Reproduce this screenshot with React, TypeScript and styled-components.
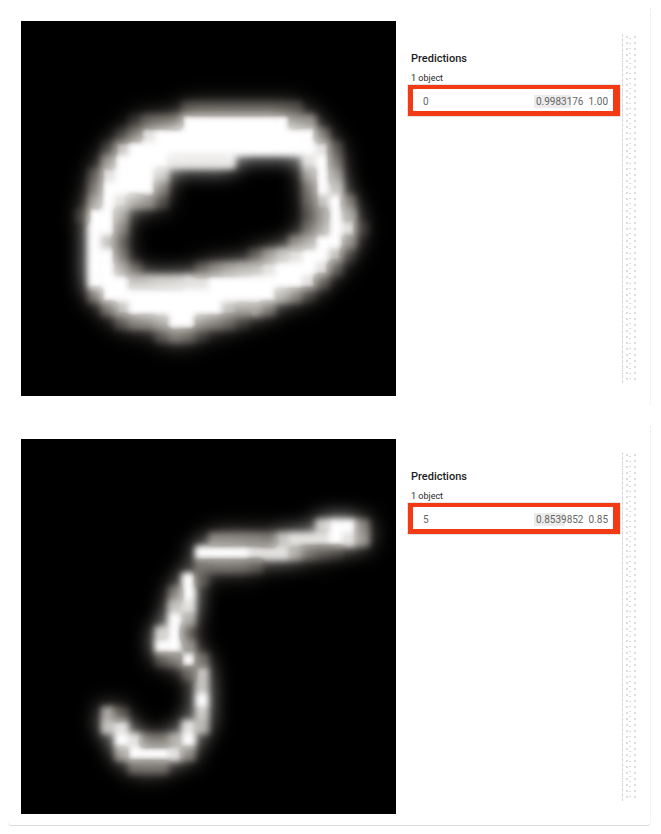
import React from "react";
import styled, { createGlobalStyle } from "styled-components";

const GlobalStyle = createGlobalStyle`
  html, body {
    margin: 0;
    background: #fff;
    font-family: Roboto, "Liberation Sans", sans-serif;
  }
`;

const Page = styled.div`
  width: 661px;
  height: 834px;
  padding: 8px 10px 0 8px;
  box-sizing: border-box;
  display: flex;
  flex-direction: column;
  gap: 19px;
  overflow: hidden;
`;

const Card = styled.section<{ $last?: boolean }>`
  display: flex;
  padding: 13px 0 ${(p) => (p.$last ? "11px" : "10px")} 13px;
  border-right: 1px dotted #e8e8e8;
  border-bottom: 1px solid ${(p) => (p.$last ? "#dcdcdc" : "transparent")};
  border-radius: 0 0 4px 4px;
`;

const Digit = styled.svg`
  display: block;
  flex: none;
  width: 375px;
  height: 375px;
  background: #000;
`;

const Panel = styled.div`
  flex: none;
  width: 224px;
  padding: 31px 0 0 15px;
  box-sizing: border-box;
`;

const Title = styled.h3`
  margin: 0;
  font-size: 11px;
  line-height: 13px;
  font-weight: 500;
  color: #1c1c1c;
`;

const Count = styled.div`
  margin-top: 8px;
  font-size: 9px;
  line-height: 11px;
  color: #2a2a2a;
`;

const HighlightBox = styled.div`
  margin: 1px 0 0 -3px;
  width: 212px;
  height: 31px;
  box-sizing: border-box;
  display: flex;
  align-items: center;
  padding: 2px 5px 0 10px;
  background: #fff;
  border-style: solid;
  border-color: #f23a15;
  border-width: 4px 7px 5px 5px;
  box-shadow: 0 0 0 0.5px #c9c9c9;
  font-size: 10px;
  color: #666;
`;

const Label = styled.span`
  flex: 1;
`;

const Score = styled.span`
  position: relative;
  margin-right: 5px;
`;

const ScoreBar = styled.i`
  position: absolute;
  left: -2px;
  top: -1px;
  bottom: -1px;
  background: #ececec;
`;

const ScoreText = styled.span`
  position: relative;
`;

const Scrollbar = styled.div`
  flex: none;
  align-self: stretch;
  width: 15px;
  margin: 13px 0 13px 2px;
  box-sizing: border-box;
  border-left: 1px dashed #d8d8d8;
  background-image:
    radial-gradient(circle, #dcdcdc 0.7px, transparent 0.9px),
    radial-gradient(circle, #dcdcdc 0.7px, transparent 0.9px);
  background-size: 8px 6px, 8px 5px;
  background-position: 0 0, 3px 2px;
`;

type Segment = [number, string];
type Bitmap = Record<number, Segment[]>;

const ZERO: Bitmap = {
  6: [[12, "222222222"]],
  7: [[8, "1333"], [12, "99999999"], [20, "55"]],
  8: [[7, "14"], [9, "8"], [10, "999999999999"], [22, "3"]],
  9: [[6, "17"], [8, "99999999999999"], [22, "82"]],
  10: [[6, "5"], [7, "9999"], [11, "88888"], [21, "893"]],
  11: [[5, "28"], [7, "999"], [10, "7"], [21, "595"]],
  12: [[5, "39"], [7, "999"], [10, "4"], [21, "397"]],
  13: [[5, "59"], [7, "8"], [8, "55"], [10, "2"], [21, "3793"]],
  14: [[4, "199"], [7, "5"], [21, "2596"]],
  15: [[5, "99"], [7, "4"], [21, "36981"]],
  16: [[5, "97"], [7, "2"], [20, "46995"]],
  17: [[5, "99"], [7, "3"], [17, "2578"], [21, "9971"]],
  18: [[5, "99"], [7, "62"], [13, "2456789"], [20, "9982"]],
  19: [[5, "999"], [8, "7777"], [12, "88"], [14, "9999999"], [21, "82"]],
  20: [[5, "3"], [6, "9999999999999"], [19, "641"]],
  21: [[6, "37"], [8, "9999999"], [15, "7663"]],
  22: [[7, "2446995431"]],
  23: [[10, "2431"]],
};

const FIVE: Bitmap = {
  6: [[22, "7994"]],
  7: [[14, "44443"], [19, "7888985"]],
  8: [[13, "99998886321"]],
  9: [[13, "33332"]],
  10: [[12, "92"]],
  11: [[11, "39"]],
  12: [[11, "78"]],
  13: [[11, "96"]],
  14: [[10, "791"]],
  15: [[10, "995"]],
  16: [[10, "2393"]],
  17: [[12, "27"]],
  18: [[13, "7"]],
  19: [[13, "9"]],
  20: [[6, "62"], [13, "7"]],
  21: [[6, "78"], [12, "86"]],
  22: [[7, "9833"], [11, "69"]],
  23: [[7, "599984"]],
  24: [[8, "333"]],
};

const Mnist = ({ bitmap, id }: { bitmap: Bitmap; id: string }) => {
  const cells = Object.entries(bitmap).flatMap(([row, segments]) =>
    segments.flatMap(([col, digits]) =>
      digits.split("").map((c, i) => {
        const v = Math.round((Number(c) / 9) * 255);
        return (
          <rect
            key={`${row}-${col}-${i}`}
            x={col + i}
            y={Number(row)}
            width={1.02}
            height={1.02}
            fill={`rgb(${v},${v},${v})`}
          />
        );
      })
    )
  );

  return (
    <Digit viewBox="0 0 28 28" aria-label="handwritten digit">
      <defs>
        <filter id={id} x="-10%" y="-10%" width="120%" height="120%" colorInterpolationFilters="sRGB">
          <feGaussianBlur in="SourceGraphic" stdDeviation="0.85" result="halo" />
          <feGaussianBlur in="SourceGraphic" stdDeviation="0.24" result="core" />
          <feBlend in="core" in2="halo" mode="lighten" result="mixed" />
          <feComponentTransfer in="mixed">
            <feFuncG type="table" tableValues="0 0.245 0.485 0.745 1" />
            <feFuncB type="table" tableValues="0 0.235 0.46 0.73 1" />
          </feComponentTransfer>
        </filter>
      </defs>
      <g filter={`url(#${id})`}>{cells}</g>
    </Digit>
  );
};

const PredictionCard = ({
  id,
  bitmap,
  label,
  score,
  shown,
  last,
}: {
  id: string;
  bitmap: Bitmap;
  label: string;
  score: string;
  shown: string;
  last?: boolean;
}) => (
  <Card $last={last}>
    <Mnist bitmap={bitmap} id={id} />
    <Panel>
      <Title>Predictions</Title>
      <Count>1 object</Count>
      <HighlightBox>
        <Label>{label}</Label>
        <Score>
          <ScoreBar style={{ width: `${Number(score) * 37}px` }} />
          <ScoreText>{score}</ScoreText>
        </Score>
        <span>{shown}</span>
      </HighlightBox>
    </Panel>
    <Scrollbar />
  </Card>
);

export default function App() {
  return (
    <>
      <GlobalStyle />
      <Page>
        <PredictionCard id="d0" bitmap={ZERO} label="0" score="0.9983176" shown="1.00" />
        <PredictionCard id="d5" bitmap={FIVE} label="5" score="0.8539852" shown="0.85" last />
      </Page>
    </>
  );
}
